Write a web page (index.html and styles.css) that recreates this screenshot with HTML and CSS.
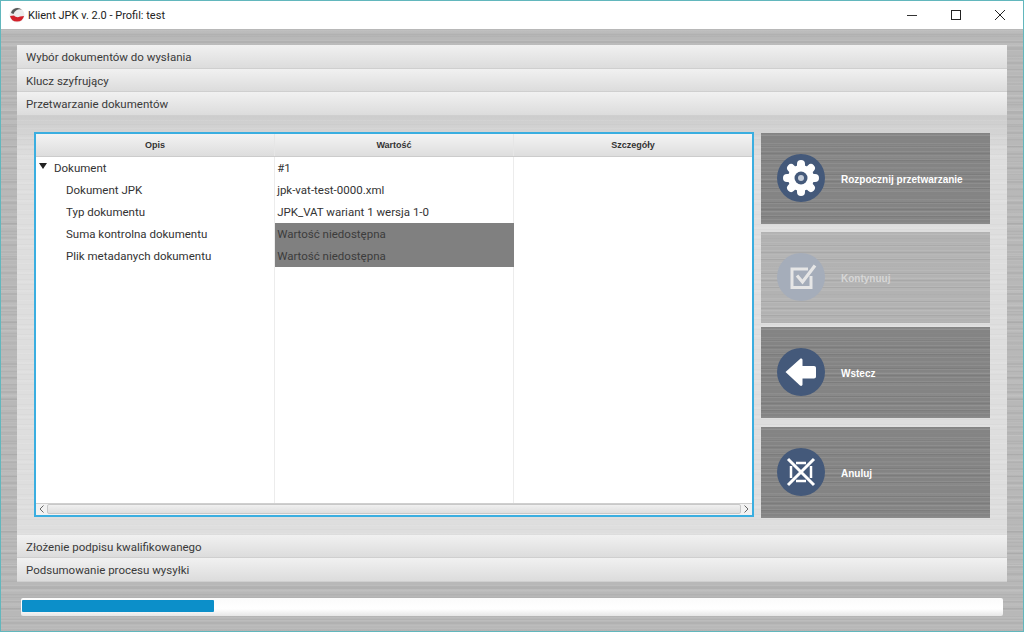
FILE: index.html
```html
<!DOCTYPE html>
<html lang="pl">
<head>
    <meta charset="UTF-8">
    <meta name="viewport" content="width=device-width, initial-scale=1.0">
    <title>Klient JPK v. 2.0 - Profil: test</title>
    <link rel="stylesheet" href="styles.css">
</head>
<body>
    <div class="window">
        <div class="titlebar">
            <svg class="app-logo" width="16" height="16" viewBox="0 0 16 16">
                <circle cx="8" cy="8" r="7.5" fill="#ececec"/>
                <path d="M1 9 A7.2 7.2 0 0 0 15 9 L11 9.5 A4 3 0 0 1 5 8.5 Z" fill="#d3202a"/>
                <path d="M2 6 A6.5 6.5 0 0 1 13 3 A6 6 0 0 0 4.5 7 Z" fill="#555"/>
            </svg>
            <span class="app-title">Klient JPK v. 2.0 - Profil: test</span>
            <div class="window-controls">
                <svg width="12" height="12" viewBox="0 0 12 12"><path d="M1 6.5H11" stroke="#333" stroke-width="1"/></svg>
                <svg width="12" height="12" viewBox="0 0 12 12"><rect x="1.5" y="1.5" width="9" height="9" fill="none" stroke="#222" stroke-width="1"/></svg>
                <svg width="12" height="12" viewBox="0 0 12 12"><path d="M1 1L11 11M11 1L1 11" stroke="#222" stroke-width="1"/></svg>
            </div>
        </div>

        <div class="main">
            <div class="accordion">
                <div class="section-head">Wybór dokumentów do wysłania</div>
                <div class="section-head">Klucz szyfrujący</div>
                <div class="section-head">Przetwarzanie dokumentów</div>

                <div class="section-body">
                    <div class="tree-table">
                        <table>
                            <thead>
                                <tr>
                                    <th>Opis</th>
                                    <th>Wartość</th>
                                    <th>Szczegóły</th>
                                </tr>
                            </thead>
                            <tbody>
                                <tr>
                                    <td class="root"><span class="arrow"></span>Dokument</td>
                                    <td class="first">#1</td>
                                    <td></td>
                                </tr>
                                <tr>
                                    <td class="child">Dokument JPK</td>
                                    <td>jpk-vat-test-0000.xml</td>
                                    <td></td>
                                </tr>
                                <tr>
                                    <td class="child">Typ dokumentu</td>
                                    <td>JPK_VAT wariant 1 wersja 1-0</td>
                                    <td></td>
                                </tr>
                                <tr>
                                    <td class="child">Suma kontrolna dokumentu</td>
                                    <td class="missing">Wartość niedostępna</td>
                                    <td></td>
                                </tr>
                                <tr>
                                    <td class="child">Plik metadanych dokumentu</td>
                                    <td class="missing">Wartość niedostępna</td>
                                    <td></td>
                                </tr>
                                <tr class="filler">
                                    <td></td><td></td><td></td>
                                </tr>
                            </tbody>
                        </table>
                        <div class="hscroll">
                            <svg width="10" height="10" viewBox="0 0 10 10"><path d="M6.5 1.5L3 5L6.5 8.5" fill="none" stroke="#666" stroke-width="1"/></svg>
                            <div class="hscroll-thumb"></div>
                            <svg width="10" height="10" viewBox="0 0 10 10"><path d="M3.5 1.5L7 5L3.5 8.5" fill="none" stroke="#666" stroke-width="1"/></svg>
                        </div>
                    </div>

                    <div class="actions">
                        <div class="action">
                            <span class="action-icon">
                                <svg width="48" height="48" viewBox="0 0 48 48">
                                    <g stroke="#fff" stroke-width="8" stroke-linecap="round">
                                        <path d="M24 10V38"/>
                                        <path d="M10 24H38"/>
                                        <path d="M14.1 14.1L33.9 33.9"/>
                                        <path d="M33.9 14.1L14.1 33.9"/>
                                    </g>
                                    <circle cx="24" cy="24" r="13" fill="#fff"/>
                                    <circle cx="24" cy="24" r="6.5" fill="#44597a"/>
                                    <circle cx="24" cy="24" r="3" fill="#c4ccd8"/>
                                </svg>
                            </span>
                            <span class="action-label">Rozpocznij przetwarzanie</span>
                        </div>
                        <div class="action action-off">
                            <span class="action-icon">
                                <svg width="48" height="48" viewBox="0 0 48 48">
                                    <path d="M34 23V34.5H15V16H31" fill="none" stroke="#e6e6e6" stroke-width="3"/>
                                    <path d="M20 22.5L25.5 29L38 12.5" fill="none" stroke="#e6e6e6" stroke-width="3.2"/>
                                </svg>
                            </span>
                            <span class="action-label">Kontynuuj</span>
                        </div>
                        <div class="action action-back">
                            <span class="action-icon">
                                <svg width="48" height="48" viewBox="0 0 48 48">
                                    <path d="M8.5 24L23 11C24 10.1 25.5 10.7 25.5 12V18H37C38.2 18 39 18.8 39 20V28.5C39 29.7 38.2 30.5 37 30.5H25.5V36.5C25.5 37.8 24 38.4 23 37.5L8.5 24Z" fill="#fff"/>
                                </svg>
                            </span>
                            <span class="action-label">Wstecz</span>
                        </div>
                        <div class="action">
                            <span class="action-icon">
                                <svg width="48" height="48" viewBox="0 0 48 48">
                                    <path d="M11 11L37 37M37 11L11 37" stroke="#fff" stroke-width="3"/>
                                    <path d="M14 18V30M34 18V30M19 15H29M19 33H29" stroke="#fff" stroke-width="2.5"/>
                                </svg>
                            </span>
                            <span class="action-label">Anuluj</span>
                        </div>
                    </div>
                </div>

                <div class="section-head">Złożenie podpisu kwalifikowanego</div>
                <div class="section-head">Podsumowanie procesu wysyłki</div>
            </div>

            <div class="progress">
                <div class="progress-fill" style="width: 19.6%"></div>
            </div>
        </div>
    </div>
</body>
</html>
```

FILE: styles.css
```css
* {
    box-sizing: border-box;
}

body {
    margin: 0;
    font-family: Roboto, Arial, sans-serif;
    font-size: 11.5px;
    color: #333;
}

.window {
    display: flex;
    flex-direction: column;
    width: 1024px;
    height: 632px;
    border: 1px solid #62b7bd;
    overflow: hidden;
}

/* title bar */
.titlebar {
    display: flex;
    align-items: center;
    height: 28px;
    padding-left: 8px;
    background: #ffffff;
    flex-shrink: 0;
}

.app-logo {
    margin-right: 3px;
}

.app-title {
    font-size: 11px;
    color: #222;
}

.window-controls {
    display: flex;
    gap: 32px;
    margin-left: auto;
    margin-right: 17px;
}

/* brushed metal background */
.main {
    flex: 1;
    padding: 16px 16px 0;
    background-color: #b8b8b8;
    background-image:
        repeating-linear-gradient(0deg, rgba(255, 255, 255, 0.06) 0 1px, transparent 1px 5px),
        repeating-linear-gradient(0deg, rgba(0, 0, 0, 0.04) 0 2px, transparent 2px 7px),
        repeating-linear-gradient(0deg, rgba(255, 255, 255, 0.05) 0 3px, transparent 3px 13px),
        repeating-linear-gradient(0deg, rgba(0, 0, 0, 0.03) 0 1px, transparent 1px 11px);
}

.accordion {
    height: 538px;
}

.section-head {
    height: 23.6px;
    padding: 5px 9px 3px;
    line-height: 15px;
    color: #3a3a3a;
    background: linear-gradient(#f1f1f1, #dcdcdc);
    border-bottom: 1px solid #cfcfcf;
}

.section-body {
    display: flex;
    height: 419px;
    padding: 16px 17px 17px;
    background-color: #dcdcdc;
    background-image:
        repeating-linear-gradient(0deg, rgba(255, 255, 255, 0.08) 0 2px, transparent 2px 9px),
        repeating-linear-gradient(0deg, rgba(0, 0, 0, 0.02) 0 1px, transparent 1px 5px),
        linear-gradient(#cdcdcd, #dedede 10%, #dedede);
}

/* tree table */
.tree-table {
    display: flex;
    flex-direction: column;
    width: 720px;
    height: 385px;
    border: 2px solid #3aaee0;
    background: #ffffff;
    margin-right: 7px;
}

.tree-table table {
    flex: 1;
    width: 100%;
    height: 100%;
    table-layout: fixed;
    border-collapse: collapse;
}

.tree-table th {
    height: 23px;
    padding: 0;
    font-family: "Liberation Sans", Arial, sans-serif;
    font-size: 9px;
    font-weight: bold;
    color: #333;
    background: linear-gradient(#f3f3f3, #dddddd);
    border-right: 1px solid #e6e6e6;
    border-bottom: 1px solid #cccccc;
}

.tree-table td {
    height: 22px;
    padding: 0 0 0 2px;
    color: #333;
    white-space: nowrap;
    border-right: 1px solid #ececec;
}

.tree-table th:last-child,
.tree-table td:last-child {
    border-right: none;
}

.tree-table td.root {
    padding: 0 0 1px 3px;
}

.tree-table td.first {
    padding-bottom: 1px;
}

.tree-table td.child {
    padding-left: 30px;
}

.tree-table td.missing {
    background: #808080;
    color: #3c3c3c;
    border-right-color: #808080;
}

.tree-table .filler td {
    height: auto;
}

.arrow {
    display: inline-block;
    width: 0;
    height: 0;
    margin-right: 7px;
    vertical-align: 3px;
    border-left: 4px solid transparent;
    border-right: 4px solid transparent;
    border-top: 6px solid #222;
}

.hscroll {
    display: flex;
    align-items: center;
    justify-content: space-between;
    flex-shrink: 0;
    height: 12px;
    padding: 0 1px;
    background: #f2f2f2;
    border-top: 1px solid #cfcfcf;
}

.hscroll-thumb {
    flex: 1;
    height: 10px;
    background: linear-gradient(#f0f0f0, #dedede);
    border: 1px solid #c8c8c8;
    border-radius: 2px;
}

/* buttons on the right */
.actions {
    display: flex;
    flex-direction: column;
    width: 229px;
    padding-top: 1px;
}

.action {
    display: flex;
    align-items: center;
    height: 91px;
    padding-left: 16px;
    font-family: "Liberation Sans", Arial, sans-serif;
    font-size: 10px;
    font-weight: bold;
    color: #ffffff;
    background-color: #848484;
    background-image:
        repeating-linear-gradient(0deg, rgba(255, 255, 255, 0.08) 0 1px, transparent 1px 4px),
        repeating-linear-gradient(0deg, rgba(0, 0, 0, 0.06) 0 1px, transparent 1px 7px),
        repeating-linear-gradient(0deg, rgba(255, 255, 255, 0.04) 0 2px, transparent 2px 11px);
}

.action-label {
    padding-top: 3px;
}

.action-off {
    margin-top: 8px;
    margin-bottom: 4px;
    color: #d6d6d6;
    background-color: #b2b2b2;
}

.action-back {
    margin-bottom: 9px;
}

.action-icon {
    display: block;
    width: 48px;
    height: 48px;
    margin-right: 16px;
    border-radius: 50%;
    background: #44597a;
}

.action-off .action-icon {
    background: #a5adba;
}

/* progress bar */
.progress {
    height: 18px;
    margin: 15px 4px 0;
    padding: 2px 1px;
    background: linear-gradient(#fbfbfb, #ffffff 60%, #e6e6e6);
    border-radius: 2px;
}

.progress-fill {
    height: 12px;
    background: #0c8fc9;
    border-radius: 1px;
}
```
